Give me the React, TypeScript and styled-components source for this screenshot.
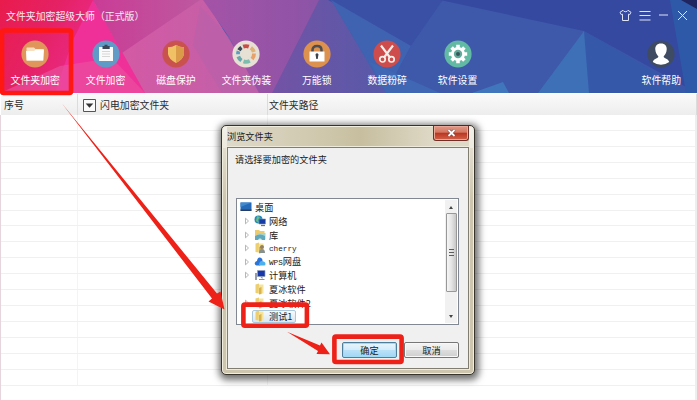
import React from "react";
import styled, { createGlobalStyle } from "styled-components";

const GlobalStyle = createGlobalStyle`
  * { box-sizing: border-box; }
  body { margin: 0; overflow: hidden; }
`;

const Window = styled.div`
  position: relative;
  display: flex;
  flex-direction: column;
  width: 697px;
  height: 400px;
  overflow: hidden;
  background: #fff;
  font-family: "Noto Sans CJK SC", sans-serif;
  font-size: 9.9px;
  line-height: 14px;
  color: #2b2b2b;
  white-space: nowrap;
`;

const Header = styled.header`
  position: relative;
  isolation: isolate;
  flex: none;
  height: 93px;
  display: flex;
  flex-direction: column;
  color: #fff;
`;

const Backdrop = styled.svg`
  position: absolute;
  inset: 0;
  z-index: -1;
`;

const TitleBar = styled.div`
  display: flex;
  justify-content: space-between;
  align-items: center;
  height: 31px;
  padding: 0 8px 0 6px;
  color: #f7e9f4;
`;

const WindowControls = styled.div`
  display: flex;
  align-items: center;
  gap: 7px;
`;

const Nav = styled.nav`
  display: flex;
  padding-top: 9px;
`;

const NavItem = styled.div<{ $end?: boolean }>`
  display: flex;
  flex-direction: column;
  align-items: center;
  gap: 5px;
  width: 70.4px;
  margin-left: ${(p) => (p.$end ? "auto" : "0")};
  margin-right: ${(p) => (p.$end ? "0.5px" : "0")};
`;

const TableHead = styled.div`
  display: grid;
  grid-template-columns: 77px 190px 1fr;
  height: 22px;
  flex: none;
  margin-left: 1px;
  background: linear-gradient(#fafafa, #ededed);
  border-top: 1px solid #fff;
`;

const HeadCell = styled.div<{ $pad: number }>`
  display: flex;
  align-items: center;
  gap: 4px;
  padding-left: ${(p) => p.$pad}px;
  padding-top: 1px;
  border-right: 1px solid #dcdcdc;
`;

const SortBox = styled.svg`
  display: block;
`;

const TableBody = styled.div`
  flex: 1;
  border-left: 1px solid #e6d5dc;
  border-right: 2px solid #eee;
`;

const TableRow = styled.div`
  display: grid;
  grid-template-columns: 77px 190px 1fr;
  height: 15.93px;
  border-bottom: 1px solid #f0f0f0;
`;

const Cell = styled.div`
  border-right: 1px solid #f4f4f4;
`;

const Dialog = styled.section`
  position: absolute;
  left: 221px;
  top: 125px;
  width: 254px;
  height: 249.5px;
  display: flex;
  flex-direction: column;
  padding: 0 5px 5px;
  border: 1px solid #37342d;
  border-radius: 5px;
  background:
    linear-gradient(#fff9, #fff0 75px) left top / 5px 75px no-repeat,
    linear-gradient(#fff9, #fff0 75px) right top / 5px 75px no-repeat,
    linear-gradient(90deg, #dfdacb, #cdc5a8 45%, #c7be9f 55%, #dfdac8 85%) top / 100% 22px no-repeat,
    #cdc5ad;
  box-shadow: inset 0 0 0 1px #f1eddf, 1px 2px 7px 3px rgba(0, 0, 0, 0.56);
  color: #202020;
  font-size: 9.2px;
  line-height: 12px;
`;

const DialogTitle = styled.div`
  display: flex;
  justify-content: space-between;
  height: 21px;
  padding-top: 4px;
`;

const CloseButton = styled.button`
  width: 36px;
  height: 15px;
  margin-top: -4px;
  padding: 0;
  display: flex;
  align-items: center;
  justify-content: center;
  border: 1px solid #6e3028;
  border-top: 0;
  border-radius: 0 0 3px 3px;
  background: linear-gradient(#df9a87, #d47763 45%, #b83521 50%, #d4634b);
  box-shadow: inset 0 0 0 1px #eba899;
`;

const DialogBody = styled.div`
  flex: 1;
  display: flex;
  flex-direction: column;
  padding: 5px 9px 10px 8px;
  border: 1px solid #817d70;
  outline: 1px solid #eeeadb;
  background: #f0f0f0;
`;

const Prompt = styled.div`
  height: 45px;
  margin-left: -1px;
`;

const TreeFrame = styled.div`
  display: flex;
  justify-content: space-between;
  height: 127px;
  padding: 1px;
  border: 1px solid #818892;
  background: #fff;
`;

const Tree = styled.div`
  flex: 1;
  padding-top: 0.5px;
  overflow: hidden;
`;

const TreeRow = styled.div<{ $root?: boolean }>`
  display: flex;
  align-items: center;
  height: 13.62px;
  padding-left: ${(p) => (p.$root ? "0" : "6px")};
`;

const Expander = styled.svg`
  flex: none;
  margin-right: 2px;
`;

const TreeLabel = styled.div<{ $selected?: boolean; $mono?: boolean }>`
  display: flex;
  align-items: center;
  gap: 3px;
  height: 13px;
  padding: 0 3px 0 1px;
  border-radius: 2px;
  border: 1px solid ${(p) => (p.$selected ? "#a9c8de" : "transparent")};
  background: ${(p) => (p.$selected ? "linear-gradient(#f7fafc, #dce7ef)" : "none")};
  font-family: ${(p) => (p.$mono ? '"Liberation Mono", ' : "")}"Noto Sans CJK SC", sans-serif;
  font-size: ${(p) => (p.$mono ? "7.7px" : "9.2px")};
`;

const Wide = styled.span`
  font-family: "Noto Sans CJK SC", sans-serif;
  font-size: 9.2px;
`;

const ScrollBar = styled.div`
  display: flex;
  flex-direction: column;
  align-items: center;
  width: 12px;
  padding: 6px 0 5px;
  background: #f1f1f1;
`;

const ScrollArrow = styled.i<{ $down?: boolean }>`
  width: 0;
  height: 0;
  border: 2.5px solid transparent;
  border-top: ${(p) => (p.$down ? "3px solid #444" : "0")};
  border-bottom: ${(p) => (p.$down ? "0" : "3px solid #444")};
`;

const Thumb = styled.div`
  width: 11px;
  height: 79px;
  margin: 4px 0 auto;
  display: flex;
  flex-direction: column;
  gap: 1px;
  align-items: center;
  justify-content: center;
  border: 1px solid #989898;
  border-radius: 1px;
  background: linear-gradient(90deg, #f6f6f6, #e4e4e4 50%, #c7c7c7);
`;

const Grip = styled.i`
  width: 5px;
  height: 1px;
  margin-bottom: 1px;
  background: #5d5d5d;
`;

const Actions = styled.div`
  display: flex;
  justify-content: flex-end;
  gap: 7px;
  margin-top: auto;
`;

const ActionButton = styled.button<{ $primary?: boolean }>`
  width: 55px;
  height: 16px;
  padding: 0;
  font: inherit;
  color: #222;
  border-radius: 2px;
  border: 1px solid ${(p) => (p.$primary ? "#4d7f9d" : "#777")};
  background: ${(p) =>
    p.$primary
      ? "linear-gradient(#e7f5fd, #d3edfb 48%, #b9e2f8 52%, #a2d6f4)"
      : "linear-gradient(#f4f4f4, #ebebeb 48%, #dddddd 52%, #cfcfcf)"};
  box-shadow: inset 0 0 0 1px ${(p) => (p.$primary ? "#9edcf5" : "#f8f8f8")};
`;

const Annotations = styled.svg`
  position: absolute;
  inset: 0;
  pointer-events: none;
`;

function LowPoly() {
  return (
    <Backdrop width="697" height="93" viewBox="0 0 697 93" preserveAspectRatio="none">
      <defs>
        <linearGradient id="red" x1="0" x2="1" y1="0" y2="0.5">
          <stop offset="0" stopColor="#e91b4c" />
          <stop offset="0.55" stopColor="#e52267" />
          <stop offset="1" stopColor="#eb2b8a" />
        </linearGradient>
        <linearGradient id="mauve" x1="0" x2="1">
          <stop offset="0" stopColor="#ca3c96" />
          <stop offset="1" stopColor="#bd589f" />
        </linearGradient>
        <linearGradient id="rose" x1="0" x2="1">
          <stop offset="0" stopColor="#d957a3" />
          <stop offset="1" stopColor="#be62a9" />
        </linearGradient>
        <linearGradient id="violet" x1="0" x2="1">
          <stop offset="0" stopColor="#a553a7" />
          <stop offset="1" stopColor="#8b54a6" />
        </linearGradient>
        <linearGradient id="indigo" x1="0" x2="1">
          <stop offset="0" stopColor="#7353a5" />
          <stop offset="1" stopColor="#5759a9" />
        </linearGradient>
        <linearGradient id="blue" x1="0" x2="1">
          <stop offset="0" stopColor="#4061b0" />
          <stop offset="1" stopColor="#3b56a9" />
        </linearGradient>
      </defs>
      <path d="M0 0H697V93H0Z" fill="url(#blue)" />
      <path d="M90 0H205L262 93H140Z" fill="url(#rose)" />
      <path d="M0 0H95L72 93H0Z" fill="url(#red)" />
      <path d="M93 0L145 93H55L72 42Z" fill="#ef3098" />
      <path d="M0 93L60 66L112 58L145 93Z" fill="#e9529f" opacity="0.65" />
      <path d="M93 0H200L122 53Z" fill="url(#mauve)" />
      <path d="M200 6L229 37L259 93H222L193 45Z" fill="#b761aa" opacity="0.6" />
      <path d="M203 0H320L273 93H259L229 37Z" fill="url(#violet)" />
      <path d="M319 0H332L387 93H272Z" fill="url(#indigo)" />
      <path d="M328 0L411 46L443 0Z" fill="#3a50a5" />
      <path d="M331 0L411 46L386 93Z" fill="#3f62b1" />
      <path d="M411 46L443 0L460 93H386Z" fill="#3b59aa" />
      <path d="M443 0L584 31L538 93H386L411 46Z" fill="#3e58aa" />
      <path d="M440 0H697V93L584 31Z" fill="#3549a1" />
      <path d="M584 31L588 93H690Z" fill="#3558a9" />
      <path d="M584 31L538 93H589Z" fill="#3d70b6" />
      <path d="M386 93L370 62L440 93Z" fill="#4067b3" />
      <path d="M472 93L503 82L509 93Z" fill="#3f76bc" />
      <path d="M670 0L686 93H697V8L682 0Z" fill="#2e59a9" />
      <path d="M681 0L697 9V0Z" fill="#20245f" />
    </Backdrop>
  );
}

function Controls() {
  return (
    <WindowControls>
      <svg width="13" height="13" viewBox="0 0 13 13" fill="none" stroke="#dfe5f7" strokeWidth="1">
        <path d="M4 1.3L1 3.3L2.3 5.7L3.5 5.2V11.5H9.5V5.2L10.7 5.7L12 3.3L9 1.3C8.4 3.2 4.6 3.2 4 1.3Z" />
      </svg>
      <svg width="12" height="13" viewBox="0 0 12 13" stroke="#dfe5f7">
        <path d="M0.5 2.5H11.5M0.5 6.5H11.5M0.5 11H11.5" />
      </svg>
      <svg width="11" height="13" viewBox="0 0 11 13" stroke="#dfe5f7">
        <path d="M1 6H10" />
      </svg>
      <svg width="13" height="13" viewBox="0 0 13 13" stroke="#dfe5f7">
        <path d="M2 2L11 11M11 2L2 11" />
      </svg>
    </WindowControls>
  );
}

const glyphs: Record<string, { color: string; art: React.ReactNode }> = {
  folder: {
    color: "#e0955a",
    art: (
      <>
        <path d="M6 7.5H13L14.5 9H22.5V20.5H5.5V8Z" fill="#f7dfbf" />
        <path d="M5 11H13L15 9.5H23L22 20.5H5.7Z" fill="#fff" />
      </>
    ),
  },
  clipboard: {
    color: "#5f9bc6",
    art: (
      <>
        <path d="M7 7H21V21H7Z" fill="#fafafa" />
        <path d="M10.5 6H12.5V4.7H15.5V6H17.7V9H10.5Z" fill="#3c4656" />
        <path d="M10 11.5H18M10 14H18M10 16.5H18" stroke="#d6d6d6" />
      </>
    ),
  },
  shield: {
    color: "#c9524e",
    art: (
      <>
        <path d="M14 5Q18 7.3 22 7.3V14Q21.5 19 14 23Q6.5 19 6 14V7.3Q10 7.3 14 5Z" fill="#f1c166" />
        <path d="M14 5Q18 7.3 22 7.3V14Q21.5 19 14 23Z" fill="#db9c49" />
      </>
    ),
  },
  palette: {
    color: "#e7e0d5",
    art: (
      <g fill="none" strokeWidth="3.8">
        <path d="M11.2 6.6A8 8 0 0 1 16.8 6.6" stroke="#c94d45" />
        <path d="M18.9 7.7A8 8 0 0 1 21.8 12" stroke="#e1b275" />
        <path d="M22 13.5A8 8 0 0 1 20 19" stroke="#e6a26a" />
        <path d="M17.8 20.8A8 8 0 0 1 11.5 21.4" stroke="#7ebdae" />
        <path d="M9.5 20.5A8 8 0 0 1 6.3 16.5" stroke="#65a9ae" />
        <path d="M6 14.3A8 8 0 0 1 6.5 11.2" stroke="#5a9cc2" />
        <path d="M7 10.2A8 8 0 0 1 9.5 7.5" stroke="#374955" />
      </g>
    ),
  },
  lock: {
    color: "#dd914f",
    art: (
      <>
        <path d="M9.5 12V10.2Q9.5 6 14 6Q18.5 6 18.5 10.2V12" fill="none" stroke="#4c4d51" strokeWidth="2.5" />
        <path d="M6.5 11.5H21.5V21.5H6.5Z" fill="#fff" />
        <path d="M12.7 15.5A1.5 1.5 0 1 1 15.3 15.5L14.7 19H13.3Z" fill="#3e4249" />
      </>
    ),
  },
  scissors: {
    color: "#ce4c4c",
    art: (
      <g fill="none" stroke="#f6eee8" strokeWidth="1.7">
        <path d="M8 5.5L17 17.5M20 5.5L11 17.5" strokeWidth="2.1" />
        <circle cx="9.5" cy="19.3" r="2.7" />
        <circle cx="18.5" cy="19.3" r="2.7" />
      </g>
    ),
  },
  gear: {
    color: "#62baa4",
    art: (
      <>
        <g stroke="#fff" strokeWidth="3.6">
          <path d="M14 4.8V23.2M4.8 14H23.2M7.6 7.6L20.4 20.4M20.4 7.6L7.6 20.4" />
        </g>
        <circle cx="14" cy="14" r="7" fill="#fff" />
        <circle cx="14" cy="14" r="4.2" fill="#62a99b" />
        <circle cx="14" cy="14" r="2" fill="#38545b" />
      </>
    ),
  },
  person: {
    color: "#3f4b62",
    art: (
      <path
        d="M14 3.4C18.1 3.4 20 6 19.7 9.5C19.5 13 18.2 14.2 16.6 16.5C16.8 18.6 21.6 18.7 22.2 22Q18.6 24.7 14 24.7Q9.4 24.7 5.8 22C6.4 18.7 11.2 18.6 11.4 16.5C9.8 14.2 8.5 13 8.3 9.5C8 6 9.9 3.4 14 3.4Z"
        fill="#fff"
      />
    ),
  },
};

function NavButton({ icon, label, end }: { icon: string; label: string; end?: boolean }) {
  const { color, art } = glyphs[icon];
  return (
    <NavItem $end={end}>
      <svg width="28" height="28" viewBox="0 0 28 28">
        <circle cx="14" cy="14" r="13.6" fill={color} />
        {art}
      </svg>
      <span>{label}</span>
    </NavItem>
  );
}

const FolderArt = () => (
  <>
    <path d="M1.5 1.5L5 0.5V10.5L1.5 10Z" fill="#edcf70" />
    <path d="M5 1.5H9.5V10.5H4.5Z" fill="#f6e39b" />
    <path d="M5 5L7.5 4V11L5 11.5Z" fill="#d8b34e" />
  </>
);

const treeArt: Record<string, React.ReactNode> = {
  desktop: (
    <>
      <path d="M0.5 1.5H11.5V9.5H0.5Z" fill="#246ab9" />
      <path d="M0.5 1.5H11.5L0.5 6Z" fill="#4189cd" />
      <path d="M0.5 8.5H11.5V10H0.5Z" fill="#253c65" />
    </>
  ),
  network: (
    <>
      <circle cx="4.5" cy="4.5" r="4" fill="#2489bd" />
      <path d="M3 1L6 2L4 5L5 8L2 6Z" fill="#70bd7b" />
      <path d="M5 4H11.5V9H5Z" fill="#173ba4" stroke="#7e94b9" strokeWidth="0.6" />
      <path d="M7 10.5H11" stroke="#687583" strokeWidth="1.3" />
    </>
  ),
  library: (
    <>
      <path d="M1 1H5L6 2H10.5V10H1Z" fill="#ebcb6d" />
      <path d="M3 4H11.5V10.5H3Z" fill="#a5d5ce" />
      <path d="M1 11V7Q6 4 11 7V11H8Q6 7 4 11Z" fill="#61a8bd" />
    </>
  ),
  user: (
    <>
      <FolderArt />
      <circle cx="8" cy="5" r="2" fill="#937f62" />
      <path d="M5 11Q5 7 8 7Q11 7 11 11Z" fill="#87918c" />
    </>
  ),
  cloud: (
    <>
      <path d="M2.5 9.5Q0 8.5 1 6.5Q1.5 5 3 5Q3.5 1 6 1.5Q8.7 2 8.5 5L6 9.5Z" fill="#2c75d8" />
      <path d="M5 9.5Q5 5 8 5Q11.5 5.5 11.5 8Q11.5 9.5 10 9.5Z" fill="#4bb1ee" />
    </>
  ),
  computer: (
    <>
      <path d="M1 4H3V11H1Z" fill="#949db0" />
      <path d="M3.5 1.5H11V7.5H3.5Z" fill="#1638aa" stroke="#8f9db8" strokeWidth="0.7" />
      <path d="M6.5 8H8.5V10H5V11H10.5V10H8.5" fill="#8392aa" />
    </>
  ),
  folder: <FolderArt />,
};

const TreeIcon = ({ name }: { name: string }) => (
  <svg width="12" height="12" viewBox="0 0 12 12">
    {treeArt[name]}
  </svg>
);

const nodes = [
  { icon: "network", text: "网络", open: true },
  { icon: "library", text: "库", open: true },
  { icon: "user", latin: "cherry", text: "", open: true },
  { icon: "cloud", latin: "WPS", text: "网盘", open: true },
  { icon: "computer", text: "计算机", open: true },
  { icon: "folder", text: "夏冰软件", open: false },
  { icon: "folder", text: "夏冰软件2", open: true },
  { icon: "folder", text: "测试1", open: false, selected: true },
];

function FolderDialog() {
  return (
    <Dialog>
      <DialogTitle>
        <span>浏览文件夹</span>
        <CloseButton aria-label="close">
          <svg width="9" height="8" viewBox="0 0 9 8">
            <path d="M1.5 1L7.5 7M7.5 1L1.5 7" stroke="#733a36" strokeWidth="3" />
            <path d="M1.5 1L7.5 7M7.5 1L1.5 7" stroke="#fff" strokeWidth="1.8" />
          </svg>
        </CloseButton>
      </DialogTitle>
      <DialogBody>
        <Prompt>请选择要加密的文件夹</Prompt>
        <TreeFrame>
          <Tree>
            <TreeRow $root>
              <TreeLabel>
                <TreeIcon name="desktop" />
                桌面
              </TreeLabel>
            </TreeRow>
            {nodes.map((n) => (
              <TreeRow key={n.text + n.icon}>
                <Expander width="6" height="8" viewBox="0 0 6 8">
                  {n.open && <path d="M1.5 1.2L4.5 4L1.5 6.8Z" fill="#fff" stroke="#a5a5a5" strokeWidth="0.8" />}
                </Expander>
                <TreeLabel $selected={n.selected} $mono={!!n.latin}>
                  <TreeIcon name={n.icon} />
                  <span>
                    {n.latin}
                    <Wide>{n.text}</Wide>
                  </span>
                </TreeLabel>
              </TreeRow>
            ))}
          </Tree>
          <ScrollBar>
            <ScrollArrow />
            <Thumb>
              <Grip />
              <Grip />
              <Grip />
            </Thumb>
            <ScrollArrow $down />
          </ScrollBar>
        </TreeFrame>
        <Actions>
          <ActionButton $primary>确定</ActionButton>
          <ActionButton>取消</ActionButton>
        </Actions>
      </DialogBody>
    </Dialog>
  );
}

const navItems = [
  ["folder", "文件夹加密"],
  ["clipboard", "文件加密"],
  ["shield", "磁盘保护"],
  ["palette", "文件夹伪装"],
  ["lock", "万能锁"],
  ["scissors", "数据粉碎"],
  ["gear", "软件设置"],
];

export default function App() {
  return (
    <Window>
      <GlobalStyle />
      <Header>
        <LowPoly />
        <TitleBar>
          <span>文件夹加密超级大师（正式版）</span>
          <Controls />
        </TitleBar>
        <Nav>
          {navItems.map(([icon, label]) => (
            <NavButton key={icon} icon={icon} label={label} />
          ))}
          <NavButton icon="person" label="软件帮助" end />
        </Nav>
      </Header>
      <TableHead>
        <HeadCell $pad={3}>序号</HeadCell>
        <HeadCell $pad={5}>
          <SortBox width="13" height="13" viewBox="0 0 13 13">
            <path d="M0.5 0.5H12.5V12.5H0.5Z" fill="#fafafa" stroke="#555" />
            <path d="M2.7 4.5H10.3L6.5 8.7Z" fill="#333" />
          </SortBox>
          闪电加密文件夹
        </HeadCell>
        <HeadCell $pad={1}>文件夹路径</HeadCell>
      </TableHead>
      <TableBody>
        {Array.from({ length: 17 }, (_, i) => (
          <TableRow key={i}>
            <Cell />
            <Cell />
          </TableRow>
        ))}
      </TableBody>
      <FolderDialog />
      <Annotations width="697" height="400" viewBox="0 0 697 400">
        <g fill="none" stroke="#ed2117" strokeWidth="4.6">
          <rect x="2" y="30.5" width="69" height="62.5" rx="1.5" stroke="#ff1712" />
          <rect x="243.4" y="304.6" width="63.5" height="21.2" rx="1.5" />
          <rect x="334.4" y="336.6" width="67.2" height="25.4" rx="1.5" />
        </g>
        <path d="M62 103.5L217 293.5L220.5 291.5L224.5 309.5L208.5 301.5L212 298.5Z" fill="#ed2117" />
        <path d="M287 331.8L320 345.5L321.5 342.5L330 354.2L316.5 354L318 351Z" fill="#ed2117" />
      </Annotations>
    </Window>
  );
}
